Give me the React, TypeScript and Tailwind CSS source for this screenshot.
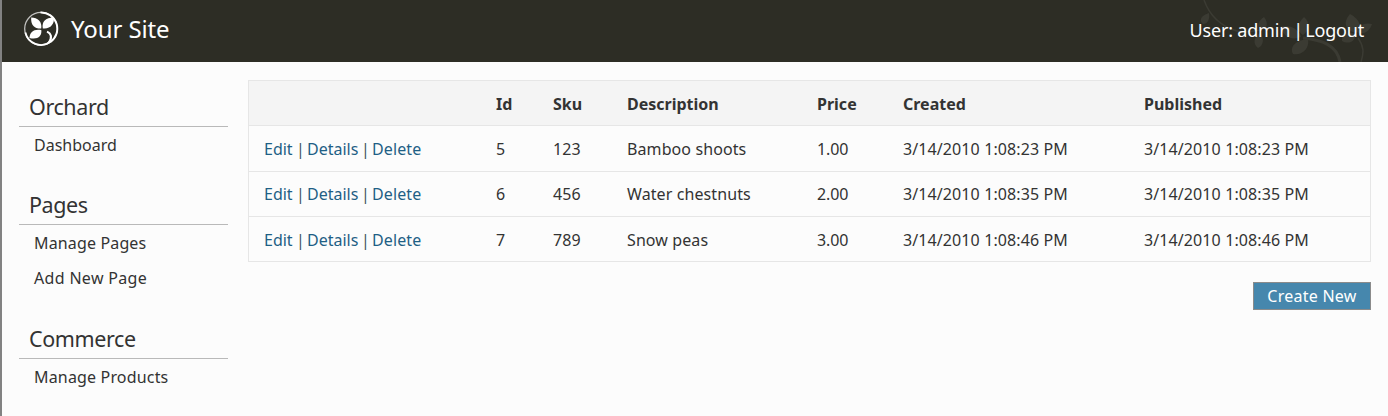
import React from "react";

const menu = [
  { title: "Orchard", items: [{ label: "Dashboard", spacing: "tracking-[0px]" }], gap: "mb-6" },
  {
    title: "Pages",
    items: [
      { label: "Manage Pages", spacing: "tracking-[0.15px]" },
      { label: "Add New Page", spacing: "tracking-[0.33px]" },
    ],
    gap: "mb-[25px]",
  },
  { title: "Commerce", items: [{ label: "Manage Products", spacing: "tracking-[0.17px]" }], gap: "mb-6" },
];

const products = [
  { id: 5, sku: "123", description: "Bamboo shoots", price: "1.00", date: "3/14/2010 1:08:23 PM", row: "h-[46px]" },
  { id: 6, sku: "456", description: "Water chestnuts", price: "2.00", date: "3/14/2010 1:08:35 PM", row: "h-[45px]" },
  { id: 7, sku: "789", description: "Snow peas", price: "3.00", date: "3/14/2010 1:08:46 PM", row: "h-[45px] pt-[2px]" },
];

const columns = "grid grid-cols-[232px_57px_74px_190px_86px_241px_1fr] items-center pl-[15px] border-b border-[#e6e6e6]";

function Logo() {
  return (
    <svg className="h-9 w-9 shrink-0" viewBox="0 0 36 36" fill="none">
      <circle cx="18" cy="17.7" r="16.3" stroke="#fff" strokeWidth="1.3" opacity=".7" />
      <path d="M17.5 1.5A16.2 16.2 0 0 1 27.2 31.1" stroke="#fff" strokeWidth="1.9" />
      <path d="M2.4 21.5A16.1 16.1 0 0 0 27.2 31.1" stroke="#fff" strokeWidth="1.8" />
      <path d="M24 20.6C28.4 22.4 29.2 26.5 25.8 31.8" stroke="#fff" strokeWidth="2" />
      <path d="M27.8 24.5C28.6 27.8 27.4 30.5 24 32.8" stroke="#fff" strokeWidth="1.6" />
      <g fill="#fff">
        <path d="M18.2 17.6C11.2 17.8 7.6 13.8 8.2 6.4C14.6 6.4 19.4 10.4 18.2 17.6Z" />
        <path d="M19.8 17.4C18.4 10.8 22.8 6.4 31 6.6C31.4 13.6 27 18.4 19.8 17.4Z" />
        <path d="M18.3 19C19 25.8 14.4 28.8 6.4 27C6.8 20.6 11.2 17.6 18.3 19Z" />
      </g>
    </svg>
  );
}

function Vine() {
  return (
    <svg className="absolute right-0 top-0 h-[62px] w-[198px]" viewBox="1190 0 198 62" fill="#3b3b33">
      <g fill="none" stroke="#3b3b33">
        <path d="M1204 0C1209 14 1220 26 1237 31C1247 34 1254 30 1262 30" strokeWidth="1.5" />
        <path d="M1303 38C1322 40 1337 45 1340 62" strokeWidth="3" />
        <path d="M1358 38C1364 46 1364 53 1361 62" strokeWidth="1.5" />
      </g>
      <path d="M1209 13C1210 19 1208 24 1203 24C1198 20 1202 15 1209 13Z" />
      <path d="M1264 17C1269 23 1267 29 1261 30C1256 27 1258 21 1264 17Z" />
      <path d="M1260 33C1265 39 1263 46 1258 48C1253 44 1253 38 1260 33Z" />
      <path d="M1304 17C1311 23 1309 31 1303 35C1296 31 1297 24 1304 17Z" />
      <path d="M1280 27C1289 24 1299 29 1301 37C1291 41 1283 36 1280 27Z" />
      <path d="M1308 39C1310 48 1302 56 1293 54C1289 47 1296 40 1308 39Z" />
      <path d="M1350 14C1360 19 1363 28 1356 33C1346 31 1342 23 1350 14Z" />
      <path d="M1372 24C1369 33 1362 35 1357 32C1359 25 1365 22 1372 24Z" />
      <path d="M1355 34C1356 41 1349 45 1342 41C1341 35 1347 31 1355 34Z" />
    </svg>
  );
}

function RowActions() {
  return (
    <div className="flex tracking-[0px]">
      <a className="w-8 text-[#1f5f85]">Edit</a>
      <span className="w-[11px] text-[#44535e]">|</span>
      <a className="w-[54px] text-[#1f5f85]">Details</a>
      <span className="w-[11px] text-[#44535e]">|</span>
      <a className="tracking-[0.1px] text-[#1f5f85]">Delete</a>
    </div>
  );
}

export default function App() {
  return (
    <div className="flex h-[416px] w-[1388px] flex-col overflow-hidden border-l-2 border-[#828282] bg-[#fcfcfc] font-['Noto_Sans',sans-serif] text-base leading-5 tracking-[0.1px] text-[#333]">
      <header className="relative flex h-[62px] shrink-0 items-center bg-[#2d2d25] pl-[21px] pr-6 text-white">
        <Vine />
        <div className="relative flex items-center pb-1">
          <Logo />
          <h1 className="ml-3 text-2xl leading-8 tracking-[-0.1px]">Your Site</h1>
        </div>
        <div className="relative ml-auto flex pb-[2px] text-[18px] tracking-[-0.18px]">
          <span>User: admin</span>
          <span className="w-[15px] pl-[3px]">|</span>
          <span>Logout</span>
        </div>
      </header>
      <div className="flex">
        <nav className="ml-[17px] w-[209px] pt-[27px]">
          {menu.map((group) => (
            <section key={group.title} className={group.gap}>
              <h2 className="h-[38px] border-b border-[#b9b9b9] pl-[10px] text-[21.5px] leading-9 tracking-[-0.4px]">{group.title}</h2>
              <ul className="pt-[1px]">
                {group.items.map((item) => (
                  <li key={item.label} className={"h-[35px] pl-[15px] leading-[35px] " + item.spacing}>{item.label}</li>
                ))}
              </ul>
            </section>
          ))}
        </nav>
        <main className="ml-5 w-[1123px] pt-[18px]">
          <div className="border border-b-0 border-[#e6e6e6]">
            <div className={columns + " h-[45px] bg-[#f4f4f4] pt-[2px] font-bold tracking-[0px]"}>
              <span />
              <span>Id</span>
              <span>Sku</span>
              <span>Description</span>
              <span>Price</span>
              <span>Created</span>
              <span>Published</span>
            </div>
            {products.map((p) => (
              <div key={p.id} className={columns + " " + p.row}>
                <RowActions />
                <span>{p.id}</span>
                <span>{p.sku}</span>
                <span>{p.description}</span>
                <span className="tracking-[-0.1px]">{p.price}</span>
                <span>{p.date}</span>
                <span>{p.date}</span>
              </div>
            ))}
          </div>
          <div className="mt-5 flex justify-end">
            <button className="h-7 w-[118px] border border-[#8b8b8b] bg-[#4687ad] leading-[26px] tracking-[0.25px] text-white">Create New</button>
          </div>
        </main>
      </div>
    </div>
  );
}
